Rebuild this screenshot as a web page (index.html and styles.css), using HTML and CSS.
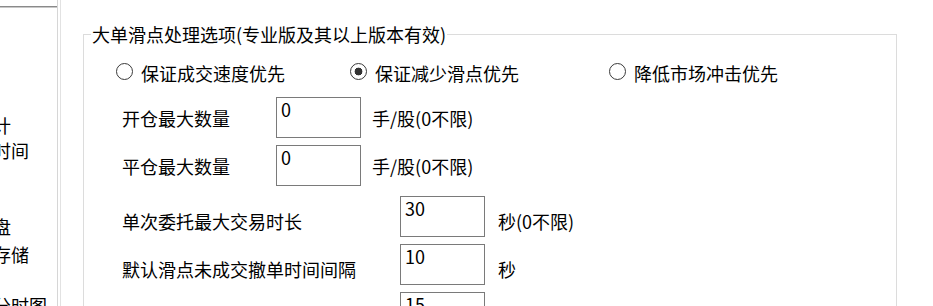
FILE: index.html
```html
<!DOCTYPE html>
<html lang="zh-CN">
<head>
<meta charset="utf-8">
<title>大单滑点处理选项</title>
<link rel="stylesheet" href="styles.css">
</head>
<body>
<div class="app">
  <div class="side">
    <div class="tree">
      <div class="tline t1 s2">统计</div>
      <div class="tline t2 s4">持仓时间</div>
      <div class="tline t3 s2">硬盘</div>
      <div class="tline t4 s4">数据存储</div>
      <div class="tline t5 s1">分时图</div>
    </div>
  </div>
  <div class="split"></div>
  <div class="main">
    <fieldset class="group">
      <legend>大单滑点处理选项(专业版及其以上版本有效)</legend>
      <div class="inner">
        <div class="radios">
          <label class="radio r1"><span class="dot"></span>保证成交速度优先</label>
          <label class="radio r2"><span class="dot on"></span>保证减少滑点优先</label>
          <label class="radio"><span class="dot"></span>降低市场冲击优先</label>
        </div>
        <div class="row first">
          <div class="lbl w1">开仓最大数量</div>
          <div class="box">0</div>
          <div class="unit">手/股(0不限)</div>
        </div>
        <div class="row">
          <div class="lbl w1">平仓最大数量</div>
          <div class="box">0</div>
          <div class="unit">手/股(0不限)</div>
        </div>
        <div class="row gap low">
          <div class="lbl w2">单次委托最大交易时长</div>
          <div class="box">30</div>
          <div class="unit">秒(0不限)</div>
        </div>
        <div class="row low">
          <div class="lbl w2">默认滑点未成交撤单时间间隔</div>
          <div class="box">10</div>
          <div class="unit">秒</div>
        </div>
        <div class="row low">
          <div class="lbl w2"></div>
          <div class="box">15</div>
          <div class="unit">秒</div>
        </div>
      </div>
    </fieldset>
  </div>
</div>
</body>
</html>
```
FILE: styles.css
```css
html, body {
  margin: 0;
  padding: 0;
  background: #ffffff;
  overflow: hidden;
}
body {
  font-family: "Noto Sans CJK SC", "Noto Sans", sans-serif;
  font-size: 18px;
  color: #000000;
}
.app {
  display: flex;
  height: 306px;
}
.side {
  flex: none;
  width: 57px;
  border-right: 1px solid #d6d6d6;
}
.tree {
  margin-top: 6px;
  height: 299px;
  border-top: 1px solid #8a8a8a;
  box-shadow: inset 0 1px #c8c8c8;
  overflow: hidden;
}
.tline {
  white-space: nowrap;
  line-height: 26px;
  height: 26px;
}
.s1 { margin-left: -7px; }
.s2 { margin-left: -25px; }
.s4 { margin-left: -43px; }
.t1 { margin-top: 105px; }
.t2 { margin-top: -1px; }
.t3 { margin-top: 50px; }
.t4 { margin-top: 2px; }
.t5 { margin-top: 25px; }
.split {
  flex: none;
  width: 1px;
  margin-left: 2px;
  background: #e2e2e2;
}
.main {
  flex: 1;
  padding: 0 36px 0 22px;
}
.group {
  margin: 24px 0 0;
  padding: 0;
  border: 1px solid #dcdcdc;
  height: 420px;
  min-width: 0;
}
.group legend {
  margin-left: 7px;
  padding: 0 1px;
  line-height: 20px;
}
.inner {
  padding-left: 32px;
}
.radios {
  display: flex;
  margin-top: 19px;
  height: 20px;
  line-height: 20px;
}
.radio {
  display: flex;
  align-items: flex-start;
  white-space: nowrap;
}
.r1 { width: 234px; }
.r2 { width: 259px; }
.dot {
  flex: none;
  width: 17px;
  height: 17px;
  box-sizing: border-box;
  border: 1px solid #3a3a3a;
  border-radius: 50%;
  margin-right: 8px;
}
.dot.on {
  background: radial-gradient(circle, #333333 0 3.6px, transparent 4.2px);
}
.row {
  display: flex;
  align-items: flex-start;
  height: 41px;
  margin-top: 7px;
}
.row.first { margin-top: 14px; }
.row.gap { margin-top: 10px; }
.lbl {
  flex: none;
  box-sizing: border-box;
  padding-left: 6px;
  margin-top: 10.5px;
  line-height: 20px;
  white-space: nowrap;
}
.w1 { width: 160px; }
.w2 { width: 284px; }
.box {
  flex: none;
  width: 85px;
  height: 41px;
  box-sizing: border-box;
  border: 1px solid #7a7a7a;
  padding: 0 4px;
  line-height: 22px;
}
.unit {
  margin-left: 11px;
  margin-top: 10.5px;
  line-height: 20px;
  white-space: nowrap;
}
.row.low .lbl { margin-top: 14.5px; }
.row.low .unit { margin-left: 13px; margin-top: 14.5px; }
```
